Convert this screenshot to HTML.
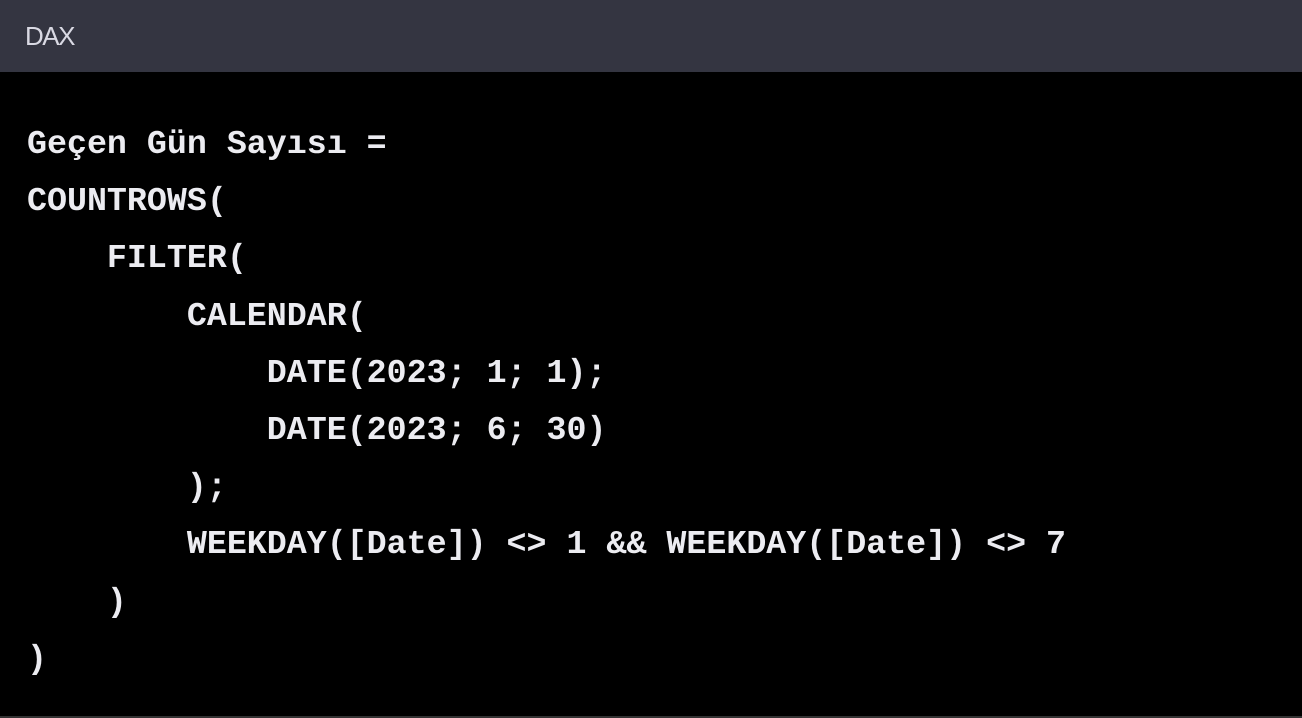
<!DOCTYPE html>
<html><head><meta charset="utf-8"><style>
html,body{margin:0;padding:0;width:1302px;height:718px;overflow:hidden;background:#000;}
.hdr{position:absolute;left:0;top:0;width:1302px;height:72px;background:#343541;}
.hdr span{position:absolute;left:25px;top:21px;font-family:"Liberation Sans",sans-serif;font-size:26px;color:#d9d9e3;letter-spacing:-1.5px;}
pre{position:absolute;left:27px;top:116px;margin:0;font-family:"Liberation Mono",monospace;font-weight:bold;font-size:33.3px;line-height:57.2px;color:#ececf1;}
.bot{position:absolute;left:0;top:716px;width:1302px;height:2px;background:#333;}
</style></head><body>
<div class="hdr"><span>DAX</span></div>
<pre>Geçen Gün Sayısı =
COUNTROWS(
    FILTER(
        CALENDAR(
            DATE(2023; 1; 1);
            DATE(2023; 6; 30)
        );
        WEEKDAY([Date]) &lt;&gt; 1 &amp;&amp; WEEKDAY([Date]) &lt;&gt; 7
    )
)</pre>
<div class="bot"></div>
</body></html>
